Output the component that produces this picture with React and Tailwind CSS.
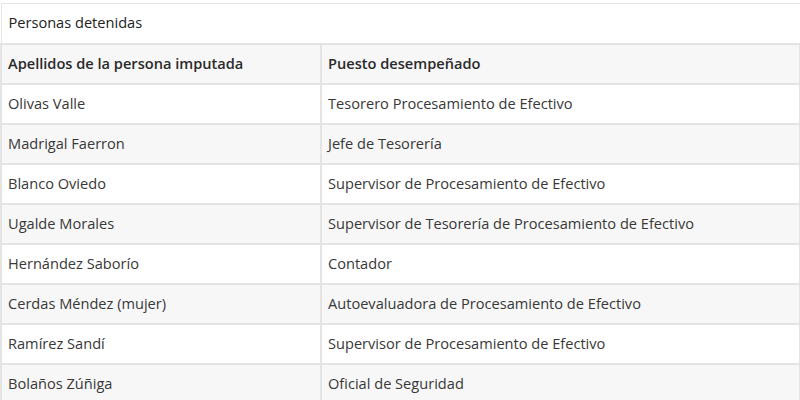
const rows = [
  ['Olivas Valle', 'Tesorero Procesamiento de Efectivo'],
  ['Madrigal Faerron', 'Jefe de Tesorería'],
  ['Blanco Oviedo', 'Supervisor de Procesamiento de Efectivo'],
  ['Ugalde Morales', 'Supervisor de Tesorería de Procesamiento de Efectivo'],
  ['Hernández Saborío', 'Contador'],
  ['Cerdas Méndez (mujer)', 'Autoevaluadora de Procesamiento de Efectivo'],
  ['Ramírez Sandí', 'Supervisor de Procesamiento de Efectivo'],
  ['Bolaños Zúñiga', 'Oficial de Seguridad'],
];

export default function App() {
  return (
    <div className="w-[800px] h-[400px] overflow-hidden bg-white pt-[3px] font-['Open_Sans',sans-serif] text-[14.6px] text-[#383838]">
      <table className="w-[801px] border-collapse">
        <thead>
          <tr className="h-[40px]">
            <th colSpan={2} className="border border-[#e5e5e5] pl-[7px] text-left font-normal text-[#222]">
              Personas detenidas
            </th>
          </tr>
          <tr className="h-[40px] bg-[#f7f7f7]">
            <th className="w-[320px] border-2 border-[#e4e4e4] pl-[6px] text-left font-semibold text-[#2a2a2a]">
              Apellidos de la persona imputada
            </th>
            <th className="border-2 border-[#e4e4e4] pl-[6px] text-left font-semibold text-[#2a2a2a]">
              Puesto desempeñado
            </th>
          </tr>
        </thead>
        <tbody>
          {rows.map(([name, role], i) => (
            <tr key={name} className={i % 2 ? 'h-[40px] bg-[#f7f7f7]' : 'h-[40px] bg-white'}>
              <td className="border-2 border-[#e4e4e4] pl-[6px]">{name}</td>
              <td className="border-2 border-[#e4e4e4] pl-[6px]">{role}</td>
            </tr>
          ))}
        </tbody>
      </table>
    </div>
  );
}
